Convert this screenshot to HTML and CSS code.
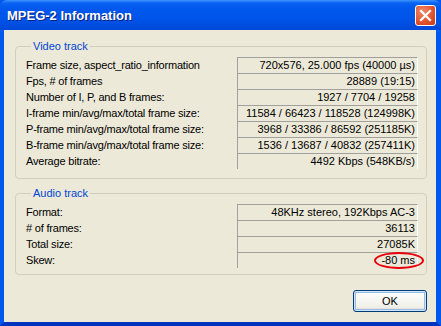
FILE: index.html
```html
<!DOCTYPE html>
<html lang="en">
<head>
    <meta charset="UTF-8">
    <meta name="viewport" content="width=device-width, initial-scale=1.0">
    <title>MPEG-2 Information</title>
    <link rel="stylesheet" href="styles.css">
</head>
<body>
    <div class="window">
        <div class="titlebar">
            <span class="title">MPEG-2 Information</span>
            <button class="close" type="button" aria-label="Close">
                <svg width="13" height="13" viewBox="0 0 13 13">
                    <path d="M2 2 L11 11 M11 2 L2 11" stroke="#fff" stroke-width="2.2" stroke-linecap="square"/>
                </svg>
            </button>
        </div>

        <div class="client">
            <fieldset class="group video">
                <legend>Video track</legend>
                <div class="row"><span class="label">Frame size, aspect_ratio_information</span><span class="value">720x576, 25.000 fps (40000 µs)</span></div>
                <div class="row"><span class="label">Fps, # of frames</span><span class="value">28889 (19:15)</span></div>
                <div class="row"><span class="label">Number of I, P, and B frames:</span><span class="value">1927 / 7704 / 19258</span></div>
                <div class="row"><span class="label">I-frame min/avg/max/total frame size:</span><span class="value">11584 / 66423 / 118528 (124998K)</span></div>
                <div class="row"><span class="label">P-frame min/avg/max/total frame size:</span><span class="value">3968 / 33386 / 86592 (251185K)</span></div>
                <div class="row"><span class="label">B-frame min/avg/max/total frame size:</span><span class="value">1536 / 13687 / 40832 (257411K)</span></div>
                <div class="row"><span class="label">Average bitrate:</span><span class="value">4492 Kbps (548KB/s)</span></div>
            </fieldset>

            <fieldset class="group audio">
                <legend>Audio track</legend>
                <div class="row"><span class="label">Format:</span><span class="value">48KHz stereo, 192Kbps AC-3</span></div>
                <div class="row"><span class="label"># of frames:</span><span class="value">36113</span></div>
                <div class="row"><span class="label">Total size:</span><span class="value">27085K</span></div>
                <div class="row"><span class="label">Skew:</span><span class="value marked">-80 ms<span class="circle"></span></span></div>
            </fieldset>

            <div class="actions">
                <button class="ok" type="button">OK</button>
            </div>
        </div>
    </div>
</body>
</html>
```

FILE: styles.css
```css
body {
    margin: 0;
    font-family: "Liberation Sans", Arial, sans-serif;
    font-size: 11px;
    background-color: #ece9d8;
}

.window {
    width: 441px;
    height: 326px;
    box-sizing: border-box;
    display: flex;
    flex-direction: column;
    background-color: #0055e5;
    border-left: 4px solid #0058ee;
    border-right: 5px solid #0058ee;
    border-bottom: 4px solid #0034c0;
    box-shadow: inset 0 -1px 0 #001ea0;
}

.titlebar {
    height: 30px;
    margin: 0 -5px 0 -4px;
    padding: 0 5px 0 7px;
    display: flex;
    align-items: center;
    justify-content: space-between;
    background: linear-gradient(#3d94ff 0, #0a63f0 3px, #0058ee 8px, #0055ea 60%, #0048d8 100%);
    border-radius: 7px 7px 0 0;
}

.title {
    color: #fff;
    font-weight: bold;
    font-size: 13px;
    text-shadow: 1px 1px 0 #0a1e80;
    padding-top: 1px;
}

.close {
    width: 21px;
    height: 21px;
    padding: 0;
    display: flex;
    align-items: center;
    justify-content: center;
    background: radial-gradient(circle at 35% 30%, #f08a6c, #e0502c 60%, #c43a18);
    border: 1px solid #fff;
    border-radius: 3px;
    margin-top: 1px;
}

.client {
    flex: 1;
    padding: 10px 9px 0 11px;
    background-color: #ece9d8;
}

.group {
    margin: 0;
    padding: 4px 8px 9px 10px;
    border: 1px solid #d0d0bf;
    border-radius: 4px;
}

.group legend {
    margin-left: 5px;
    padding: 0 2px;
    line-height: 13px;
    color: #0046d5;
}

.audio {
    margin-top: 8px;
    padding-bottom: 6px;
}

.row {
    display: grid;
    grid-template-columns: 1fr 181px;
    height: 16px;
    align-items: center;
}

.label {
    color: #000;
    letter-spacing: -0.2px;
}

.value {
    position: relative;
    height: 16px;
    box-sizing: border-box;
    padding-right: 2px;
    line-height: 14px;
    text-align: right;
    border-top: 1px solid #a0a0a0;
    border-left: 1px solid #a0a0a0;
    border-right: 1px solid #fff;
}

.circle {
    position: absolute;
    left: 136px;
    top: -1px;
    width: 50px;
    height: 17px;
    box-sizing: border-box;
    border: 2px solid #e8000b;
    border-radius: 50%;
}

.actions {
    display: flex;
    justify-content: flex-end;
    margin-top: 15px;
}

.ok {
    width: 74px;
    height: 22px;
    font-family: inherit;
    font-size: 11px;
    color: #000;
    background: linear-gradient(#fff, #f0f0ea 80%, #d6d0c5);
    border: 1px solid #003c74;
    border-radius: 3px;
    box-shadow: inset 0 0 0 1px #cee7ff, inset 0 0 0 2px #98b8ea;
}
```
